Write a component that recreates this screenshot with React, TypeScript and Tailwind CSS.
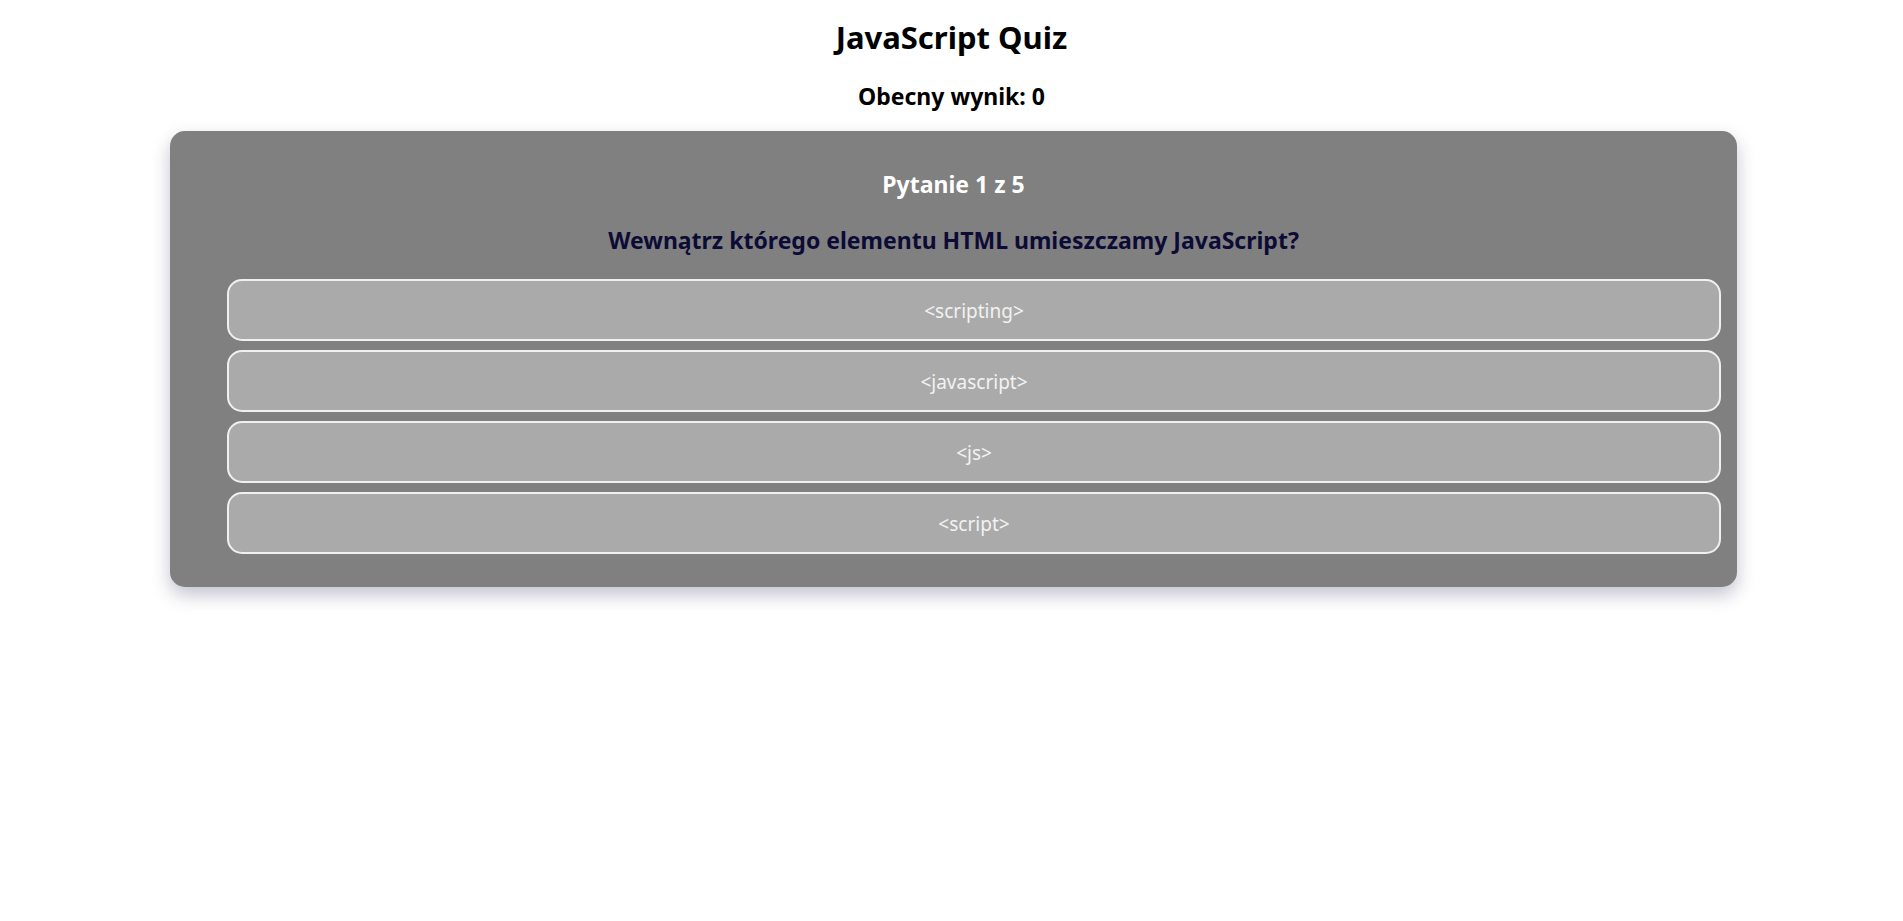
import React, { useState } from "react";

const answers = ["<scripting>", "<javascript>", "<js>", "<script>"];

const App: React.FC = () => {
  const [score] = useState(0);
  const [current] = useState(0);

  return (
    <div className="min-h-screen bg-white text-center font-['Noto_Sans','Open_Sans',sans-serif]">
      {/* Header */}
      <h1 className="pt-[17px] text-[31px] leading-[40px] font-bold text-black">JavaScript Quiz</h1>
      <h2 className="mt-[24px] text-[23px] leading-[30px] font-bold text-black">Obecny wynik: {score}</h2>

      {/* Question card */}
      <div className="mt-[20px] ml-[170px] w-[1567px] rounded-[15px] bg-[#808080] pt-[38px] pb-[33px] pl-[57px] pr-[16px] shadow-[0_8px_18px_rgba(40,40,90,0.28)]">
        <h3 className="-ml-[41px] text-[23px] leading-[30px] font-bold text-white">
          Pytanie {current + 1} z 5
        </h3>
        <p className="-ml-[41px] mt-[26px] text-[23px] leading-[30px] font-bold text-[#0c0b36]">
          Wewnątrz którego elementu HTML umieszczamy JavaScript?
        </p>

        <div className="mt-[24px] flex flex-col gap-[9px]">
          {answers.map(a => (
            <button
              key={a}
              className="h-[62px] w-full rounded-[15px] border-2 border-[#f0f0f0] bg-[#aaaaaa] pt-[2px] text-[19px] text-[#f2f2f2]"
            >
              {a}
            </button>
          ))}
        </div>
      </div>
    </div>
  );
};

export default App;
